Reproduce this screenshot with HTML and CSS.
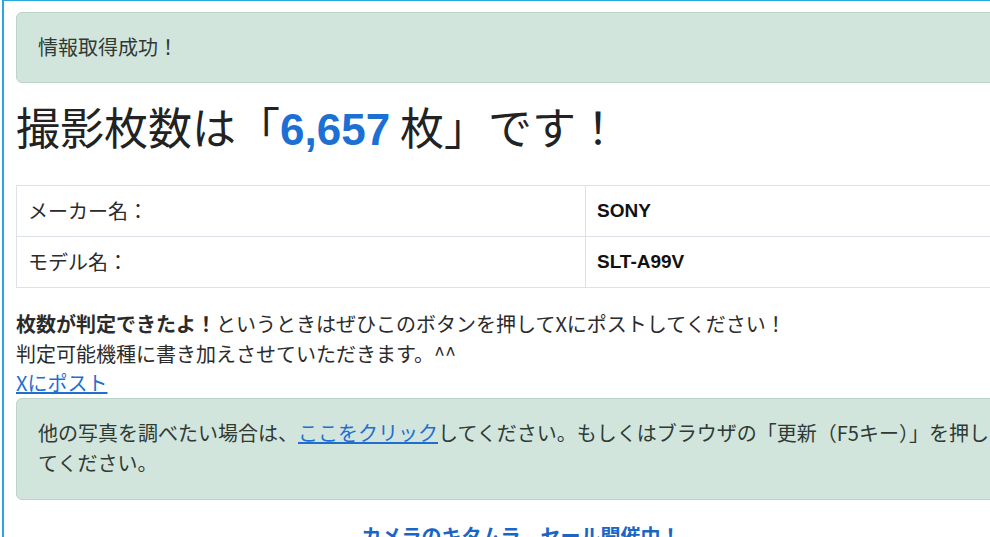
FILE: index.html
```html
<!DOCTYPE html>
<html lang="ja">
<head>
    <meta charset="UTF-8">
    <meta name="viewport" content="width=device-width, initial-scale=1.0">
    <title>撮影枚数チェッカー</title>
    <link rel="stylesheet" href="styles.css">
</head>
<body>
    <div class="frame">
        <div class="alert">情報取得成功！</div>

        <h1 class="result">撮影枚数は「<span class="count">6,657</span> 枚」です！</h1>

        <table class="info">
            <tr>
                <th>メーカー名：</th>
                <td>SONY</td>
            </tr>
            <tr>
                <th>モデル名：</th>
                <td>SLT-A99V</td>
            </tr>
        </table>

        <p class="note">
            <strong>枚数が判定できたよ！</strong>というときはぜひこのボタンを押してXにポストしてください！<br>
            判定可能機種に書き加えさせていただきます。^^<br>
            <a href="#">Xにポスト</a>
        </p>

        <div class="alert alert-wide">他の写真を調べたい場合は、<a href="#">ここをクリック</a>してください。もしくはブラウザの「更新（F5キー）」を押してください。</div>

        <p class="sale"><a href="#">カメラのキタムラ　セール開催中！</a></p>
    </div>
</body>
</html>
```

FILE: styles.css
```css
html, body {
    margin: 0;
    padding: 0;
    overflow: hidden;
    background: #fff;
}

body {
    padding-left: 2px;
    font-family: "Noto Sans CJK JP", "Liberation Sans", sans-serif;
    font-size: 20px;
    line-height: 1.5;
    color: #2b2b2b;
}

.frame {
    width: 1010px;
    padding: 11px 12px 40px;
    border-left: 2px solid #2aa7de;
    border-top: 1px solid #2aa7de;
}

.alert {
    padding: 19px 21px 20px;
    background: #d1e5dc;
    border: 1px solid #bcd3c8;
    border-radius: 6px;
    color: #2f3a35;
}

.alert-wide {
    padding-bottom: 21px;
}

.alert a {
    color: #1f6fd0;
}

.result {
    margin: 17px 0 29px;
    font-size: 44px;
    font-weight: normal;
    line-height: 53px;
    color: #222;
}

.count {
    font-family: "Liberation Sans", sans-serif;
    font-weight: bold;
    color: #1c6fd3;
}

.info {
    width: 100%;
    border-collapse: collapse;
}

.info th, .info td {
    border: 1px solid #dee2e6;
    padding: 10px 11px;
    text-align: left;
    line-height: 30px;
}

.info th {
    width: 546px;
    font-weight: normal;
}

.info td {
    font-family: "Liberation Sans", sans-serif;
    font-size: 19px;
    font-weight: bold;
    color: #111;
}

.note {
    margin: 21px 0 0;
    line-height: 29.5px;
}

.note a {
    color: #1f6fd0;
}

.sale {
    margin: 21px 0 0;
    text-align: center;
    font-weight: bold;
}

.sale a {
    color: #1a66c8;
    text-decoration: none;
}
```
